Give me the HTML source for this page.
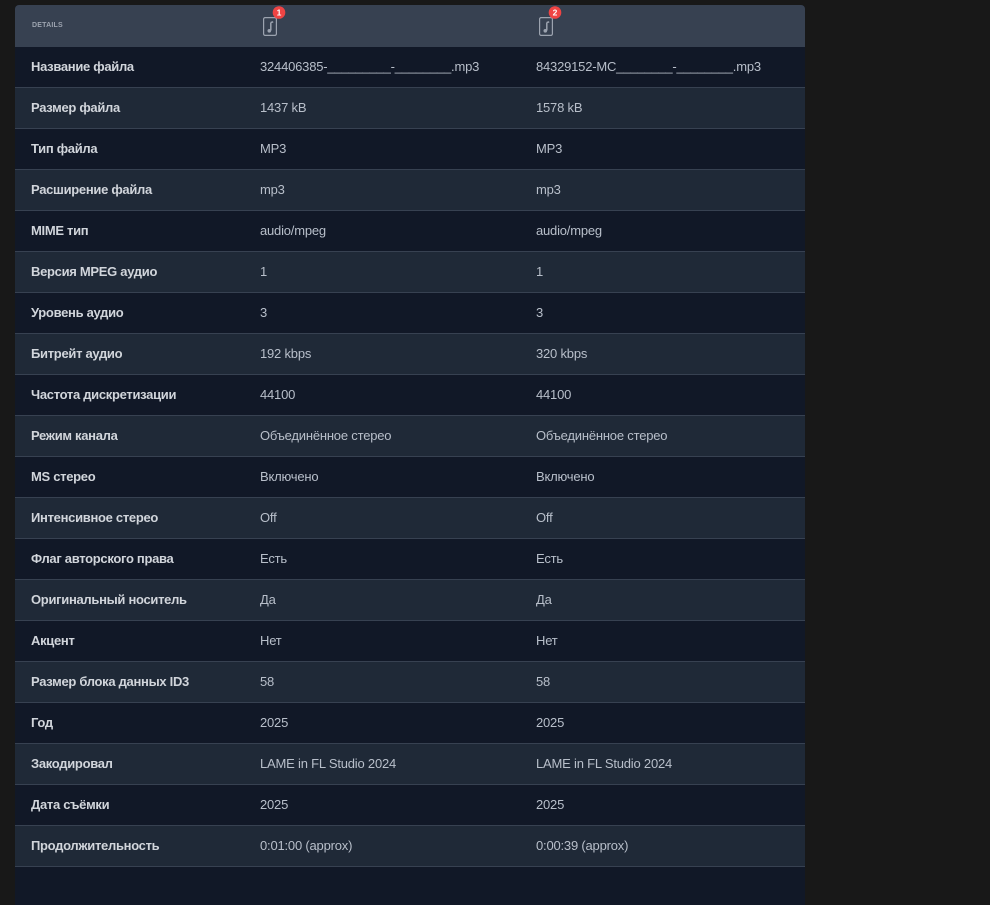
<!DOCTYPE html>
<html><head><meta charset="utf-8"><style>
html,body{margin:0;padding:0;background:#181818;width:990px;height:884px;overflow:hidden}
.card{position:absolute;left:15px;top:5px;width:790px;height:900px;background:#111827;border-radius:4px 4px 0 0;overflow:hidden;font-family:"Liberation Sans","Noto Sans CJK SC",sans-serif}
.hdr{height:42px;background:#374151;position:relative}
.hdr .d{position:absolute;left:17px;top:17px;font-size:7px;font-weight:bold;color:#9ca3af;letter-spacing:.2px}
.ic{position:absolute;top:0}
.row{height:40px;border-bottom:1px solid #374151;position:relative;font-size:13px}
.row:nth-child(even){background:#1f2937}
.row span{position:absolute;top:12px;white-space:nowrap}
.l{left:16px;font-weight:bold;color:#d1d5db;letter-spacing:-.3px}
.a{left:245px;color:#b8bfca;letter-spacing:-.2px}
.b{left:521px;color:#b8bfca;letter-spacing:-.2px}
</style></head><body>
<div class="card">
<div class="hdr"><div class="d">DETAILS</div>
<svg class="ic" style="left:245px" width="30" height="42" viewBox="0 0 30 42"><rect x="3.6" y="12.6" width="12.8" height="17.8" rx="1.5" fill="none" stroke="#9ca3af" stroke-width="1.2"/><path d="M10.8 17.5v8" stroke="#9ca3af" stroke-width="1.5"/><path d="M10.8 17.5l2.4-0.6" stroke="#9ca3af" stroke-width="1.5"/><circle cx="9.3" cy="25.8" r="1.8" fill="#9ca3af"/><circle cx="19" cy="7.5" r="6.3" fill="#ef4444"/><text x="19" y="10.5" font-size="8.5" font-weight="bold" fill="#fff" text-anchor="middle" font-family="Liberation Sans">1</text></svg>
<svg class="ic" style="left:521px" width="30" height="42" viewBox="0 0 30 42"><rect x="3.6" y="12.6" width="12.8" height="17.8" rx="1.5" fill="none" stroke="#9ca3af" stroke-width="1.2"/><path d="M10.8 17.5v8" stroke="#9ca3af" stroke-width="1.5"/><path d="M10.8 17.5l2.4-0.6" stroke="#9ca3af" stroke-width="1.5"/><circle cx="9.3" cy="25.8" r="1.8" fill="#9ca3af"/><circle cx="19" cy="7.5" r="6.3" fill="#ef4444"/><text x="19" y="10.5" font-size="8.5" font-weight="bold" fill="#fff" text-anchor="middle" font-family="Liberation Sans">2</text></svg>
</div>
<div>
<div class="row"><span class="l">Название файла</span><span class="a">324406385-_________-________.mp3</span><span class="b">84329152-MC________-________.mp3</span></div>
<div class="row"><span class="l">Размер файла</span><span class="a">1437 kB</span><span class="b">1578 kB</span></div>
<div class="row"><span class="l">Тип файла</span><span class="a">MP3</span><span class="b">MP3</span></div>
<div class="row"><span class="l">Расширение файла</span><span class="a">mp3</span><span class="b">mp3</span></div>
<div class="row"><span class="l">MIME тип</span><span class="a">audio/mpeg</span><span class="b">audio/mpeg</span></div>
<div class="row"><span class="l">Версия MPEG аудио</span><span class="a">1</span><span class="b">1</span></div>
<div class="row"><span class="l">Уровень аудио</span><span class="a">3</span><span class="b">3</span></div>
<div class="row"><span class="l">Битрейт аудио</span><span class="a">192 kbps</span><span class="b">320 kbps</span></div>
<div class="row"><span class="l">Частота дискретизации</span><span class="a">44100</span><span class="b">44100</span></div>
<div class="row"><span class="l">Режим канала</span><span class="a">Объединённое стерео</span><span class="b">Объединённое стерео</span></div>
<div class="row"><span class="l">MS стерео</span><span class="a">Включено</span><span class="b">Включено</span></div>
<div class="row"><span class="l">Интенсивное стерео</span><span class="a">Off</span><span class="b">Off</span></div>
<div class="row"><span class="l">Флаг авторского права</span><span class="a">Есть</span><span class="b">Есть</span></div>
<div class="row"><span class="l">Оригинальный носитель</span><span class="a">Да</span><span class="b">Да</span></div>
<div class="row"><span class="l">Акцент</span><span class="a">Нет</span><span class="b">Нет</span></div>
<div class="row"><span class="l">Размер блока данных ID3</span><span class="a">58</span><span class="b">58</span></div>
<div class="row"><span class="l">Год</span><span class="a">2025</span><span class="b">2025</span></div>
<div class="row"><span class="l">Закодировал</span><span class="a">LAME in FL Studio 2024</span><span class="b">LAME in FL Studio 2024</span></div>
<div class="row"><span class="l">Дата съёмки</span><span class="a">2025</span><span class="b">2025</span></div>
<div class="row"><span class="l">Продолжительность</span><span class="a">0:01:00 (approx)</span><span class="b">0:00:39 (approx)</span></div>
</div>
</div>
</body></html>
